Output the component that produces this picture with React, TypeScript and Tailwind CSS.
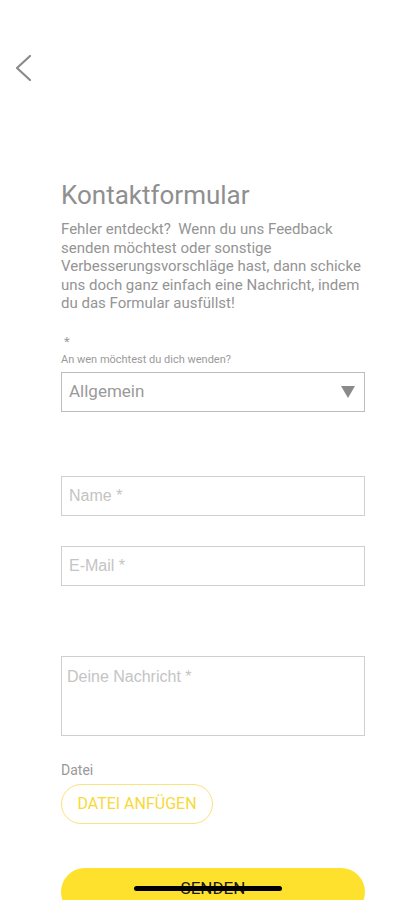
import React from 'react';

// Kontaktformular – Feedback-Seite

const sans = { fontFamily: 'Roboto, "Noto Sans", sans-serif' };

function BackChevron() {
  return (
    <svg width="20" height="28" viewBox="0 0 20 28" fill="none">
      <path d="M17 2 L4 14 L17 26" stroke="#8a8a8a" strokeWidth="2.2" strokeLinecap="round" strokeLinejoin="round" />
    </svg>
  );
}

function InputBox({ placeholder, tall }: { placeholder: string; tall?: boolean }) {
  return (
    <div
      className={`w-full border-[1.5px] border-[#cfcfcf] bg-white ${tall ? 'h-[80px] pt-[8px] pl-[5px]' : 'h-[40px] pl-[7px] flex items-center'}`}
    >
      <span className="text-[16px] text-[#c4c4c4]" style={{ fontFamily: '"Liberation Sans", Arial, sans-serif' }}>
        {placeholder}
      </span>
    </div>
  );
}

export default function App() {
  return (
    <div className="relative w-[416px] h-[900px] overflow-hidden bg-white" style={sans}>
      <div className="pt-[54px] pl-[13px]">
        <BackChevron />
      </div>

      <div className="pl-[61px] pr-[51px] w-full">
        <h1 className="mt-[98px] text-[26px] leading-[30px] text-[#8f8f8f] font-normal">Kontaktformular</h1>
        <p className="mt-[10px] text-[15px] leading-[18.5px] text-[#949494] whitespace-pre-wrap">
          {'Fehler entdeckt?  Wenn du uns Feedback senden möchtest oder sonstige Verbesserungsvorschläge hast, dann schicke uns doch ganz einfach eine Nachricht, indem du das Formular ausfüllst!'}
        </p>

        <div className="mt-[22px] pl-[3px] text-[13px] leading-[14px] text-[#9a9a9a]">*</div>
        <div className="mt-[4px] text-[11px] leading-[14px] text-[#9a9a9a]">An wen möchtest du dich wenden?</div>

        <div className="mt-[5px] h-[40px] w-full border-[1.5px] border-[#bdbdbd] flex items-center justify-between pl-[7px] pr-[9px]">
          <span className="text-[17px] text-[#9a9a9a]">Allgemein</span>
          <svg width="14" height="12" viewBox="0 0 14 12">
            <path d="M0 0 H14 L7 12 Z" fill="#8a8a8a" />
          </svg>
        </div>

        <div className="mt-[64px]">
          <InputBox placeholder="Name *" />
        </div>
        <div className="mt-[30px]">
          <InputBox placeholder="E-Mail *" />
        </div>
        <div className="mt-[70px]">
          <InputBox placeholder="Deine Nachricht *" tall />
        </div>

        <div className="mt-[25px] text-[14px] leading-[18px] text-[#999999]">Datei</div>
        <button className="mt-[5px] h-[40px] w-[152px] rounded-full border-[1.5px] border-[#f8e37c] text-[16px] text-[#f6d93a] uppercase">
          Datei anfügen
        </button>

        <button className="mt-[44px] h-[48px] w-full rounded-full bg-[#fde12d] text-[17px] leading-[20px] text-[#1a1a1a] pt-[10px] flex justify-center">
          SENDEN
        </button>
      </div>

      <div className="absolute left-[134px] top-[886px] h-[5px] w-[148px] rounded-full bg-black" />
    </div>
  );
}
